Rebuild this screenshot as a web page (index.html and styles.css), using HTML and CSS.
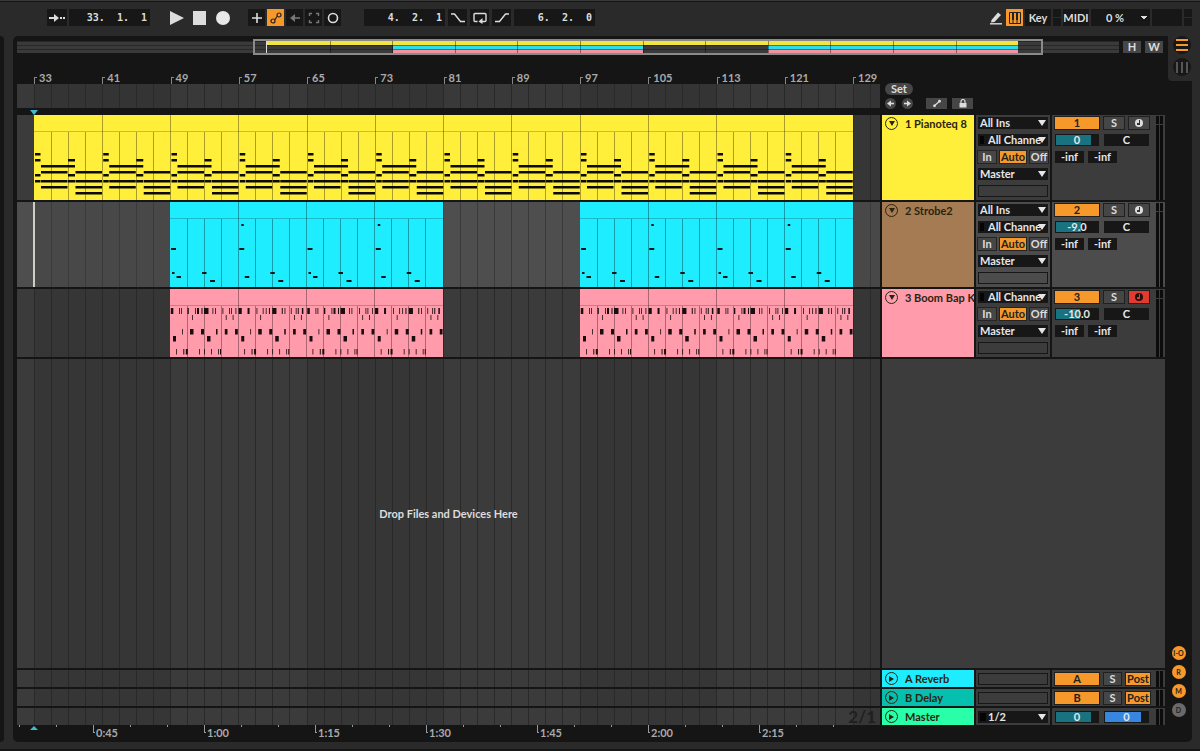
FILE: index.html
```html
<!DOCTYPE html>
<html lang="en">
<head>
    <meta charset="UTF-8">
    <meta name="viewport" content="width=device-width, initial-scale=1.0">
    <title>Arrangement</title>
    <link rel="stylesheet" href="styles.css">
</head>
<body>
    <header class="toolbar">
        <div class="group">
            <button class="tool wide" aria-label="Follow"><svg width="18" height="12" viewBox="0 0 18 12"><path d="M1 6h7M12 6h2M15 6h2" stroke="#ddd" stroke-width="2"/><path d="M6 2l5 4-5 4z" fill="#ddd"/></svg></button>
            <input class="position" aria-label="Song position" value="33.  1.  1">
        </div>
        <div class="group transport">
            <button class="bare" aria-label="Play"><svg width="14" height="16" viewBox="0 0 14 16"><path d="M0 1l14 7-14 7z" fill="#ddd"/></svg></button>
            <button class="bare" aria-label="Stop"><svg width="14" height="16" viewBox="0 0 14 16"><path d="M0 1h13v14h-13z" fill="#ddd"/></svg></button>
            <button class="bare" aria-label="Record"><svg width="14" height="16" viewBox="0 0 14 16"><circle cx="7" cy="8" r="7" fill="#e8e8e8"/></svg></button>
        </div>
        <div class="group modes">
            <button class="tool" aria-label="Overdub"><svg width="12" height="12" viewBox="0 0 12 12"><path d="M6 1v10M1 6h10" stroke="#ddd" stroke-width="1.6"/></svg></button>
            <button class="tool on" aria-label="Automation arm"><svg width="12" height="12" viewBox="0 0 12 12" fill="none" stroke="#222" stroke-width="1.2"><circle cx="3" cy="9" r="2"/><circle cx="9" cy="3" r="2"/><path d="M4.5 7.5c2 0 1-3 3-3"/></svg></button>
            <button class="tool" aria-label="Re-enable automation"><svg width="12" height="12" viewBox="0 0 12 12"><path d="M4 6h7" stroke="#777" stroke-width="1.6"/><path d="M6 2l-5 4 5 4z" fill="#777"/></svg></button>
            <button class="tool" aria-label="Capture"><svg width="12" height="12" viewBox="0 0 12 12" fill="none" stroke="#777" stroke-width="1.4"><path d="M1.5 4v-2.5h2.5M8 1.5h2.5v2.5M10.5 8v2.5h-2.5M4 10.5h-2.5v-2.5"/></svg></button>
            <button class="tool" aria-label="Session record"><svg width="12" height="12" viewBox="0 0 12 12"><circle cx="6" cy="6" r="4.5" fill="none" stroke="#ddd" stroke-width="1.6"/></svg></button>
        </div>
        <div class="group looping">
            <input class="position" aria-label="Loop start" value="4.  2.  1">
            <button class="tool wide" aria-label="Punch in"><svg width="14" height="12" viewBox="0 0 14 12" fill="none" stroke="#ddd" stroke-width="1.4"><path d="M0 2h3.5l6 7.5h4.5"/></svg></button>
            <button class="tool wide" aria-label="Loop"><svg width="14" height="12" viewBox="0 0 14 12" fill="none" stroke="#ddd" stroke-width="1.4"><path d="M4.500 9.500h-2.500a1 1 0 0 1-1-1v-6a1 1 0 0 1 1-1h10a1 1 0 0 1 1 1v6a1 1 0 0 1-1 1h-3"/><path d="M9.500 6l-4 3.500 4 2.500z" fill="#ddd" stroke="none"/></svg></button>
            <button class="tool wide" aria-label="Punch out"><svg width="14" height="12" viewBox="0 0 14 12" fill="none" stroke="#ddd" stroke-width="1.4"><path d="M0 9.500h4.500l6-7.500h3.500"/></svg></button>
            <input class="position" aria-label="Loop length" value="6.  2.  0">
        </div>
        <div class="group settings">
            <button class="tool clear" aria-label="Draw mode"><svg width="14" height="14" viewBox="0 0 14 14"><path d="M2.500 9l6.500-7.500 3 2.500-6.500 7-3.500.5z" fill="#ddd"/><path d="M1 12.800h12" stroke="#ddd" stroke-width="1.4"/></svg></button>
            <button class="tool on" aria-label="Computer MIDI keyboard"><svg width="12" height="12" viewBox="0 0 12 12"><path d="M.5.5h11v11h-11zM4 6v6M8 6v6" fill="none" stroke="#222"/><path d="M3 0h2v8h-2zM7 0h2v8h-2z" fill="#222"/></svg></button>
            <button class="tool text">Key</button>
            <span class="leds"></span>
            <button class="tool text">MIDI</button>
            <select class="cpu" aria-label="CPU load"><option>0 %</option></select>
            <span class="disk"></span>
            <span class="leds"></span>
        </div>
    </header>

    <main class="workspace">
        <div class="browser-edge"></div>
        <section class="panel">
            <div class="arrangement">
                <div class="overview">
                    <svg id="overview" viewBox="0 0 1102 16" preserveAspectRatio="none"></svg>
                    <button class="small">H</button>
                    <button class="small">W</button>
                </div>

                <div class="row ruler-row">
                    <div class="ruler">
                        <div class="bars" id="bars"></div>
                        <div class="scrub"><svg class="grid" data-tone="dark"></svg></div>
                        <svg class="marker" width="10" height="5" viewBox="0 0 10 5"><path d="M1 0h8l-4 5z" fill="#3fb8d0"/></svg>
                    </div>
                    <div class="locators">
                        <button class="pill">Set</button>
                        <div class="locator-tools">
                            <button class="round" aria-label="Previous locator"><svg width="11" height="11" viewBox="0 0 11 11"><path d="M5 5.500h4" stroke="#ddd" stroke-width="1.6"/><path d="M6 2.500l-4 3 4 3z" fill="#ddd"/></svg></button>
                            <button class="round" aria-label="Next locator"><svg width="11" height="11" viewBox="0 0 11 11"><path d="M2 5.500h4" stroke="#ddd" stroke-width="1.6"/><path d="M5 2.500l4 3-4 3z" fill="#ddd"/></svg></button>
                            <button class="lock" aria-label="Automation mode"><svg width="10" height="9" viewBox="0 0 10 9"><path d="M2 7l6-5" stroke="#ddd" stroke-width="1.2"/><circle cx="2.5" cy="6.8" r="1.4" fill="#ddd"/><circle cx="7.5" cy="2.2" r="1.4" fill="#ddd"/></svg></button>
                            <button class="lock" aria-label="Lock envelopes"><svg width="10" height="9" viewBox="0 0 10 9"><path d="M1.5 4h7v4.5h-7z" fill="#ddd"/><path d="M3 4.5v-2a2 2 0 0 1 4 0v2" fill="none" stroke="#ddd" stroke-width="1.2"/></svg></button>
                        </div>
                    </div>
                </div>

                <div class="row track">
                    <div class="lane"><svg class="grid" data-clips="piano"></svg></div>
                    <div class="name yellow"><button class="fold" aria-label="Fold track 1"></button>1 Pianoteq 8</div>
                    <div class="io">
                        <div class="choice"><select aria-label="Track 1 input"><option>All Ins</option></select></div>
                        <div class="choice channel"><select aria-label="Track 1 channel"><option>All Channe</option></select></div>
                        <div class="monitor"><button>In</button><button class="on">Auto</button><button>Off</button></div>
                        <div class="choice"><select aria-label="Track 1 output"><option>Master</option></select></div>
                        <div class="slot"></div>
                    </div>
                    <div class="mixer">
                        <div class="line"><button class="activator">1</button><button class="solo">S</button><button class="arm" aria-label="Arm track 1"></button></div>
                        <div class="line"><input class="level" aria-label="Track 1 volume" value="0" style="--level: 83%"><input class="pan" aria-label="Track 1 pan" value="C"></div>
                        <div class="line sends"><input aria-label="Track 1 send A" value="-inf"><input aria-label="Track 1 send B" value="-inf"></div>
                        <div class="meter"></div>
                    </div>
                </div>

                <div class="row track selected">
                    <div class="lane"><svg class="grid" data-tone="light" data-clips="strobe"></svg></div>
                    <div class="name brown"><button class="fold" aria-label="Fold track 2"></button>2 Strobe2</div>
                    <div class="io">
                        <div class="choice"><select aria-label="Track 2 input"><option>All Ins</option></select></div>
                        <div class="choice channel"><select aria-label="Track 2 channel"><option>All Channe</option></select></div>
                        <div class="monitor"><button>In</button><button class="on">Auto</button><button>Off</button></div>
                        <div class="choice"><select aria-label="Track 2 output"><option>Master</option></select></div>
                        <div class="slot"></div>
                    </div>
                    <div class="mixer">
                        <div class="line"><button class="activator">2</button><button class="solo">S</button><button class="arm" aria-label="Arm track 2"></button></div>
                        <div class="line"><input class="level" aria-label="Track 2 volume" value="-9.0" style="--level: 60%"><input class="pan" aria-label="Track 2 pan" value="C"></div>
                        <div class="line sends"><input aria-label="Track 2 send A" value="-inf"><input aria-label="Track 2 send B" value="-inf"></div>
                        <div class="meter"></div>
                    </div>
                </div>

                <div class="row track short">
                    <div class="lane"><svg class="grid" data-clips="drums"></svg></div>
                    <div class="name pink"><button class="fold" aria-label="Fold track 3"></button>3 Boom Bap K</div>
                    <div class="io">
                        <div class="choice channel"><select aria-label="Track 3 channel"><option>All Channe</option></select></div>
                        <div class="monitor"><button>In</button><button class="on">Auto</button><button>Off</button></div>
                        <div class="choice"><select aria-label="Track 3 output"><option>Master</option></select></div>
                        <div class="slot"></div>
                    </div>
                    <div class="mixer">
                        <div class="line"><button class="activator">3</button><button class="solo">S</button><button class="arm armed" aria-label="Arm track 3"></button></div>
                        <div class="line"><input class="level" aria-label="Track 3 volume" value="-10.0" style="--level: 58%"><input class="pan" aria-label="Track 3 pan" value="C"></div>
                        <div class="line sends"><input aria-label="Track 3 send A" value="-inf"><input aria-label="Track 3 send B" value="-inf"></div>
                        <div class="meter"></div>
                    </div>
                </div>

                <div class="row drop-row">
                    <div class="lane drop"><svg class="grid"></svg><span>Drop Files and Devices Here</span></div>
                    <div class="blank"></div>
                </div>

                <div class="row bus">
                    <div class="lane"><svg class="grid"></svg></div>
                    <div class="name cyan"><button class="fold closed" aria-label="Unfold return A"></button>A Reverb</div>
                    <div class="io"><div class="slot"></div></div>
                    <div class="mixer">
                        <div class="line"><button class="activator">A</button><button class="solo">S</button><button class="post">Post</button></div>
                        <div class="meter"></div>
                    </div>
                </div>
                <div class="row bus">
                    <div class="lane"><svg class="grid"></svg></div>
                    <div class="name teal"><button class="fold closed" aria-label="Unfold return B"></button>B Delay</div>
                    <div class="io"><div class="slot"></div></div>
                    <div class="mixer">
                        <div class="line"><button class="activator">B</button><button class="solo">S</button><button class="post">Post</button></div>
                        <div class="meter"></div>
                    </div>
                </div>
                <div class="row bus">
                    <div class="lane"><svg class="grid"></svg><span class="zoom">2/1</span></div>
                    <div class="name green"><button class="fold closed" aria-label="Unfold master"></button>Master</div>
                    <div class="io"><div class="choice channel outs"><select aria-label="Master output"><option>1/2</option></select></div></div>
                    <div class="mixer">
                        <div class="line"><input class="level" aria-label="Master volume" value="0" style="--level: 83%"><input class="level cue" aria-label="Cue volume" value="0" style="--level: 83%"></div>
                        <div class="meter"></div>
                    </div>
                </div>

                <div class="row time-row">
                    <div class="times" id="times"></div>
                </div>
            </div>

            <aside class="rail">
                <div class="views">
                    <button class="view" aria-label="Arrangement view"><svg width="18" height="18" viewBox="0 0 18 18"><path d="M3 4h12M3 9h12M3 14h12" stroke="#f7982a" stroke-width="2"/></svg></button>
                    <button class="view" aria-label="Session view"><svg width="18" height="18" viewBox="0 0 18 18"><path d="M4 4v11M9 4v11M14 4v11" stroke="#555" stroke-width="2"/></svg></button>
                </div>
                <div class="toggles">
                    <button class="toggle">I-O</button>
                    <button class="toggle">R</button>
                    <button class="toggle">M</button>
                    <button class="toggle off">D</button>
                </div>
            </aside>
        </section>
    </main>
    <footer class="status"></footer>
    <script src="script.js"></script>
</body>
</html>
```
FILE: styles.css
```css
* {
    box-sizing: border-box;
}
body {
    margin: 0;
    min-height: 100vh;
    display: flex;
    flex-direction: column;
    background: #2a2a2a;
    color: #ddd;
    font: bold 11px/12px Lato, "Liberation Sans", sans-serif;
}
button, input, select {
    margin: 0;
    padding: 0;
    border: 0;
    border-radius: 0;
    font: inherit;
    color: inherit;
    appearance: none;
    min-width: 0;
}
button {
    display: flex;
    align-items: center;
    justify-content: center;
    background: #464646;
}
svg {
    display: block;
}

/* toolbar */
.toolbar {
    display: flex;
    height: 36px;
    padding: 8px 8px 9px 47px;
    border-top: 1px solid #3a3a3a;
    box-shadow: inset 0 1px #141414;
}
.group {
    display: flex;
    align-items: center;
    height: 17px;
    gap: 2px;
}
.transport {
    gap: 9px;
    margin-left: 20px;
}
.modes {
    margin-left: 18px;
}
.looping {
    gap: 3px;
    margin-left: 23px;
}
.looping .wide {
    width: 19px;
}
.settings {
    margin-left: auto;
}
.tool {
    width: 17px;
    height: 17px;
    background: #171717;
}
.wide {
    width: 20px;
}
.text {
    width: 26px;
}
.clear {
    background: none;
}
.on, .tool.on {
    background: #f7982a;
    color: #222;
}
.bare {
    background: none;
}
.position {
    width: 81px;
    height: 17px;
    padding-right: 3px;
    background: #171717;
    text-align: right;
    font: bold 10px/17px "DejaVu Sans Mono", monospace;
}
.leds {
    width: 8px;
    height: 17px;
    background: linear-gradient(#171717 8px, #2a2a2a 8px, #2a2a2a 9px, #171717 9px);
}
.cpu {
    width: 59px;
    height: 17px;
    padding-left: 15px;
    background: #171717 conic-gradient(from -40deg at 50% 100%, #ddd 80deg, transparent 0) no-repeat 50px 7px / 6px 4px;
}
.disk {
    width: 30px;
    height: 17px;
    background: #171717;
}

/* panel */
.workspace {
    flex: 1;
    display: flex;
    gap: 9px;
    padding-right: 8px;
}
.browser-edge {
    width: 4px;
    background: #151515;
    border-radius: 0 5px 5px 0;
}
.panel {
    flex: 1;
    min-width: 0;
    display: flex;
    padding-left: 4px;
    background: #151515;
    border-radius: 5px;
}
.arrangement {
    flex: 1;
    min-width: 0;
    display: flex;
    flex-direction: column;
    gap: 2px;
    padding-top: 3px;
}
.overview {
    display: flex;
    align-items: center;
    gap: 4px;
    padding-right: 2px;
}
.overview svg {
    flex: 1;
    min-width: 0;
    height: 16px;
}
.small {
    width: 18px;
    height: 12px;
}
.row {
    display: grid;
    grid-template-columns: minmax(0, 1fr) 92px 74px 113px;
    column-gap: 2px;
}
.ruler-row {
    height: 56px;
}
.ruler {
    position: relative;
    display: flex;
    flex-direction: column;
    padding-top: 15px;
}
.bars {
    display: grid;
    grid-template-columns: 68fr repeat(12, minmax(0, 273fr)) minmax(0, 108fr);
    height: 12px;
    color: #aaa;
}
.bar {
    position: relative;
    padding-left: 5px;
    white-space: nowrap;
}
.bar::before {
    content: "";
    position: absolute;
    left: 0;
    bottom: 0;
    width: 2px;
    height: 6px;
    border-top: 1px solid #888;
    border-left: 1px solid #888;
}
.scrub {
    position: relative;
    height: 24px;
}
.marker {
    position: absolute;
    left: 12px;
    bottom: -2px;
    z-index: 1;
}
.locators {
    grid-column: 2 / -1;
    padding: 26px 0 0 3px;
}
.pill {
    width: 28px;
    height: 12px;
    border-radius: 6px;
}
.locator-tools {
    display: flex;
    align-items: center;
    gap: 5px;
    padding-top: 3px;
}
.round {
    width: 11px;
    height: 11px;
    border-radius: 50%;
    margin-right: 1px;
}
.lock {
    width: 21px;
    height: 11px;
    margin-left: 7px;
}
.lock + .lock {
    margin-left: 0;
}

/* tracks */
.track {
    height: 85px;
}
.short {
    height: 68px;
}
.lane {
    position: relative;
    min-width: 0;
    background: #383838;
}
.grid {
    width: 100%;
    height: 100%;
    position: absolute;
}
.name {
    display: flex;
    gap: 7px;
    padding: 2px 0 0 3px;
    color: #2b2510;
    line-height: 13px;
    white-space: nowrap;
    overflow: hidden;
}
.fold {
    flex: none;
    width: 13px;
    height: 13px;
    border: 1px solid currentColor;
    border-radius: 50%;
    background: none;
}
.fold::before {
    content: "";
    border: 3px solid transparent;
    border-width: 5px 3px 0;
    border-top-color: currentColor;
}
.closed::before {
    border: 3px solid transparent;
    border-width: 3px 0 3px 5px;
    border-left-color: currentColor;
}
.yellow { background: #ffee3a; }
.brown { background: #a47b53; }
.pink { background: #ff9bab; }
.cyan { background: #1eecff; }
.teal { background: #05bfaf; }
.green { background: #29ffa9; }
.io, .mixer {
    display: flex;
    flex-direction: column;
    gap: 5px;
    padding: 3px 2px 0;
    background: #3c3c3c;
}
.track .io, .track .mixer {
    padding-top: 2px;
}
.selected .io, .selected .mixer {
    background: #4c4c4c;
}
.choice {
    position: relative;
    height: 12px;
    background: #171717;
}
.choice select {
    display: block;
    width: 100%;
    height: 12px;
    padding-left: 2px;
    background: none;
    color: #e6e6e6;
}
.choice::after {
    content: "";
    position: absolute;
    right: 2px;
    top: 3px;
    border: 4px solid transparent;
    border-width: 6px 4px 0;
    border-top-color: #e6e6e6;
    pointer-events: none;
}
.channel select {
    padding-left: 10px;
}
.channel::before {
    content: "";
    position: absolute;
    left: 2px;
    top: 2px;
    width: 4px;
    height: 8px;
    background: #050505;
}
.channel:not(.outs)::after {
    box-shadow: none;
}
.monitor {
    display: flex;
    gap: 4px;
}
.monitor button {
    width: 18px;
    height: 12px;
    outline: 1px solid #242424;
}
.monitor .on {
    width: 26px;
}
.slot {
    height: 12px;
    border: 1px solid #171717;
}
.mixer {
    position: relative;
    padding-left: 3px;
}
.line {
    display: flex;
    gap: 5px;
}
.line button {
    height: 12px;
    outline: 1px solid #202020;
}
.line .activator, .line .post {
    width: 44px;
    background: #f7982a;
    color: #222;
}
.line .solo, .line .arm {
    width: 20px;
}
.arm::before {
    content: "";
    width: 8px;
    height: 8px;
    border-radius: 50%;
    background: linear-gradient(#333, #333) no-repeat 4px 1px / 1px 4px, linear-gradient(#333, #333) no-repeat 2px 4px / 3px 2px, #ddd;
}
.line .armed {
    background: #e23a2e;
}
.armed::before {
    background: linear-gradient(#e23a2e, #e23a2e) no-repeat 4px 1px / 1px 4px, linear-gradient(#e23a2e, #e23a2e) no-repeat 2px 4px / 3px 2px, #251010;
}
.line input {
    width: 45px;
    height: 12px;
    text-align: center;
    color: #e6e6e6;
    background: #171717;
}
.line .level {
    width: 44px;
    border: 1px solid #171717;
    background: linear-gradient(90deg, #19727f var(--level), #171717 var(--level));
}
.line .cue {
    width: 45px;
    background: linear-gradient(90deg, #3787e0 var(--level), #171717 var(--level));
}
.sends {
    gap: 4px;
}
.line.sends input {
    width: 29px;
}
.meter {
    position: absolute;
    top: 1px;
    bottom: 0;
    right: 2px;
    width: 7px;
    background: linear-gradient(90deg, #0c0c0c 3px, transparent 3px, transparent 4px, #0c0c0c 4px);
}
.track .meter::before {
    content: "";
    position: absolute;
    top: 8px;
    width: 7px;
    height: 1px;
    background: #3c3c3c;
}

/* drop area */
.drop-row {
    flex: 1;
    min-height: 60px;
}
.drop {
    display: flex;
    align-items: center;
    justify-content: center;
}
.drop span {
    position: relative;
}
.blank {
    grid-column: 2 / -1;
    background: #3c3c3c;
}

/* returns and master */
.bus {
    height: 17px;
}
.bus .line .solo {
    width: 17px;
}
.bus .line .post {
    width: 24px;
}
.outs::before {
    width: 6px;
}
.zoom {
    position: absolute;
    right: 4px;
    bottom: 0;
    color: #202020;
    font-size: 17px;
    line-height: 17px;
}
.time-row {
    height: 17px;
    margin-top: -2px;
}
.times {
    position: relative;
    display: grid;
    grid-template-columns: 77fr repeat(6, minmax(0, 111fr)) minmax(0, 120fr);
    color: #aaa;
}
.time {
    padding: 2px 0 0 2px;
}
.times svg {
    position: absolute;
    width: 100%;
    height: 10px;
}

/* right rail */
.rail {
    width: 27px;
    display: flex;
    flex-direction: column;
    justify-content: space-between;
}
.views {
    display: flex;
    flex-direction: column;
    align-items: center;
    gap: 4px;
    width: 24px;
    height: 45px;
    margin-left: 3px;
    padding-left: 4px;
    background: #2a2a2a;
    border-radius: 0 0 0 4px;
}
.view {
    width: 18px;
    height: 18px;
    border-radius: 50%;
    background: #171717;
}
.toggles {
    display: flex;
    flex-direction: column;
    align-items: center;
    gap: 5px;
    padding-bottom: 25px;
}
.toggle {
    width: 14px;
    height: 14px;
    border-radius: 50%;
    background: #f7982a;
    color: #222;
    font-size: 7px;
}
.off {
    background: #6a6a6a;
}
.status {
    height: 9px;
    border-bottom: 2px solid #171717;
}
```
FILE: script.js
```js
const BAR8 = 68.25;     // width of eight bars
const LEFT = 17;        // bar 33
const WIDTH = 863;

const tones = {
    normal: ['#3b3b3b', '#363636', '#292929'],
    light: ['#4e4e4e', '#484848', '#3a3a3a'],
    dark: ['#393939', '#343434', '#292929']
};

function rect(x, y, w, h, fill, extra) {
    return `<rect x="${x}" y="${y}" width="${w}" height="${h}" fill="${fill}" ${extra || ''}/>`;
}

function grid(tone, h) {
    const [light, dark, line] = tones[tone];
    let out = rect(0, 0, WIDTH, h, light);
    for (let i = 0; i < 7; i += 2) {
        out += rect(LEFT + i * BAR8 * 2, 0, BAR8 * 2, h, dark);
    }
    for (let i = 0; i < 50; i++) {
        out += rect(Math.floor(LEFT + i * BAR8 / 4), 0, 1, h, line);
    }
    return out;
}

// notes: [x, y, width] inside one eight-bar loop
const piano = [
    [1, 38, 5.5], [1, 44, 5.5], [34, 44, 7], [7, 50, 34],
    [7, 56, 26.5], [41.5, 56, 26.5], [1, 59, 5.5], [34, 59, 7],
    [1, 65, 5.5], [7, 65, 26.5], [34, 65, 7], [41.5, 65, 26.5],
    [7, 71, 26.5], [41.5, 71, 26.5], [41.5, 77, 26.5]
];
const strobe = [[1, 46, 5], [32, 70, 4.5], [6.5, 74, 4.5], [40, 78, 5]];

// drum rows: [y, height, hits]
const hats = [
    [[0.8, 2.5], [9, 0.8], [11, 0.8], [17.5, 1.3], [25, 0.8], [27, 2], [31.5, 1], [34, 4.5], [42.5, 0.8], [45, 0.8], [52.5, 0.8], [59, 0.8], [61, 0.8], [65.5, 0.8]],
    [[0.3, 3.2], [9.3, 2], [18.3, 0.8], [24.5, 0.8], [27.5, 0.8], [30.7, 1], [34, 4.2], [43.5, 1], [46.3, 0.8], [52.6, 0.8], [57.5, 0.8], [59.5, 1], [63.6, 1.5]]
];
const drums = [
    [26, 5, [[22, 0.8], [55.8, 0.8], [62.7, 0.8]]],
    [40, 5.5, [[12, 0.8], [20, 3.5], [31, 3], [46, 1.5], [54.8, 2.7], [65, 2.8]]],
    [47, 5.5, [[3, 3], [37, 3.5]]],
    [60, 5.5, [[6, 0.8], [13.3, 1], [15.8, 2], [29, 0.8], [34, 0.8], [41, 0.8], [48, 0.8], [50, 1]]]
];

function notes(kind, x, n) {
    if (kind === 'piano') {
        return piano.map(p => rect(x + p[0], p[1], p[2], 2.5, '#0c0a00')).join('');
    }
    if (kind === 'strobe') {
        const list = strobe.concat(n % 2 ? [[3, 22, 2.5]] : [[2, 70, 2.5]]);
        return list.map(p => rect(x + p[0], p[1], p[2], 2, '#04181a')).join('');
    }
    return [[19, 6, hats[n % 2]]].concat(drums).map(([y, h, hits]) =>
        hits.map(p => rect(x + p[0], y, p[1], h, '#1a0d10')).join('')).join('');
}

function clip(kind, start, loops, color, h) {
    const x0 = Math.floor(LEFT + start * BAR8);
    const crisp = 'shape-rendering="crispEdges"';
    let out = rect(x0, 0, loops * BAR8, h, color, crisp);
    out += rect(x0, 16, loops * BAR8, 1, '#0003', crisp);
    for (let i = 1; i < loops * 4; i++) {
        const top = i % 4 ? 17 : 0;
        out += rect(Math.floor(x0 + i * BAR8 / 4), top, 1, h - top, '#0005', crisp);
    }
    for (let i = 0; i < loops; i++) {
        out += notes(kind, x0 + i * BAR8, i);
    }
    return out;
}

document.querySelectorAll('.grid').forEach(svg => {
    const kind = svg.dataset.clips;
    const h = kind === 'drums' ? 68 : 85;
    svg.setAttribute('viewBox', `0 0 ${WIDTH} ${h}`);
    svg.setAttribute('preserveAspectRatio', 'none');
    let out = grid(svg.dataset.tone || 'normal', h);
    if (kind === 'piano') {
        out += clip(kind, 0, 12, '#ffee3a', h);
    }
    if (kind === 'strobe') {
        out += clip(kind, 2, 4, '#1eecff', h) + clip(kind, 8, 4, '#1eecff', h);
        out += rect(LEFT - 1, 0, 2, h, '#d0cdc5');
    }
    if (kind === 'drums') {
        out += clip(kind, 2, 4, '#ff9bab', h) + clip(kind, 8, 4, '#ff9bab', h);
    }
    svg.innerHTML = out;
});

// bar numbers
let bars = '<span></span>';
for (let n = 33; n <= 129; n += 8) {
    bars += `<span class="bar">${n}</span>`;
}
document.getElementById('bars').innerHTML = bars;

// time ruler
let ticks = '';
for (let i = 0; i < 23; i++) {
    const x = 2 + i * 37;
    ticks += rect(x, 0, 1, i % 3 === 2 ? 8 : 2, '#999');
    if (i % 3 === 2) {
        ticks += rect(x, 7, 2, 1, '#999');
    }
}
ticks += '<path d="M13 5h8l-4-4z" fill="#3fb8d0"/>';
let times = `<svg viewBox="0 0 ${WIDTH} 10" preserveAspectRatio="none">${ticks}</svg><span></span>`;
['0:45', '1:00', '1:15', '1:30', '1:45', '2:00', '2:15'].forEach(t => {
    times += `<span class="time">${t}</span>`;
});
document.getElementById('times').innerHTML = times;

// overview
let view = '';
[2, 6, 10].forEach(y => { view += rect(0, y + 0.5, 1102, 3.5, '#3a3a3a'); });
view += rect(250, 2, 751, 4, '#f2e540');
[376, 751].forEach(x => {
    view += rect(x, 6.5, 250, 4, '#2adcec') + rect(x, 11, 250, 3, '#f293a3');
});
for (let i = 1; i < 12; i++) {
    view += rect(Math.round(250 + i * 62.6), 2, 1, 12, '#0006');
}
view += rect(249, 1, 1, 13, '#ddd');
view += '<rect x="237" y="1" width="788" height="14" fill="none" stroke="#8a8a8a" stroke-width="2"/>';
document.getElementById('overview').innerHTML = view;
```
